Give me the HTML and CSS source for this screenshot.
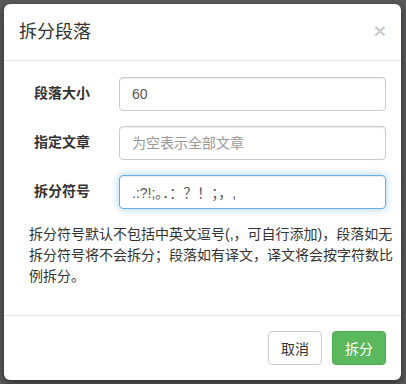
FILE: index.html
```html
<!DOCTYPE html>
<html lang="zh-CN">
<head>
    <meta charset="UTF-8">
    <meta name="viewport" content="width=device-width, initial-scale=1.0">
    <title>拆分段落</title>
    <link rel="stylesheet" href="styles.css">
</head>
<body>
    <div class="modal">
        <div class="modal-header">
            <h4 class="modal-title">拆分段落</h4>
            <button class="close" type="button">&times;</button>
        </div>

        <div class="modal-body">
            <div class="form-group">
                <label for="size">段落大小</label>
                <input type="text" id="size" class="form-control" value="60">
            </div>
            <div class="form-group">
                <label for="article">指定文章</label>
                <input type="text" id="article" class="form-control" placeholder="为空表示全部文章">
            </div>
            <div class="form-group">
                <label for="sep">拆分符号</label>
                <input type="text" id="sep" class="form-control focus" value=".:?!;。．：？！；，,">
            </div>
            <p class="help">拆分符号默认不包括中英文逗号(,，可自行添加)，段落如无拆分符号将不会拆分；段落如有译文，译文将会按字符数比例拆分。</p>
        </div>

        <div class="modal-footer">
            <button class="btn btn-default" type="button">取消</button>
            <button class="btn btn-success" type="button">拆分</button>
        </div>
    </div>
</body>
</html>
```

FILE: styles.css
```css
:root {
    --border: #e5e5e5;
    --text: #333333;
    --green: #5cb85c;
}

* {
    box-sizing: border-box;
}

body {
    margin: 0;
    padding: 4px 5px 5px 4px;
    background: #595959;
    font-family: "Liberation Sans", "Noto Sans CJK SC", sans-serif;
    font-size: 14px;
    line-height: 1.42857;
    color: var(--text);
}

.modal {
    background: #ffffff;
    border-radius: 6px;
    box-shadow: 0 3px 9px rgba(0, 0, 0, 0.5);
    width: 397px;
}

.modal-header {
    display: flex;
    justify-content: space-between;
    align-items: center;
    padding: 15px;
    border-bottom: 1px solid var(--border);
}

.modal-title {
    margin: 0;
    font-size: 18px;
    font-weight: 400;
    line-height: 26px;
}

.close {
    border: none;
    background: none;
    padding: 0;
    margin-top: -4px;
    font-family: "Liberation Sans", sans-serif;
    font-size: 21px;
    font-weight: bold;
    line-height: 1;
    color: #000000;
    opacity: 0.2;
}

.modal-body {
    padding: 16px 15px 15px;
}

.form-group {
    display: flex;
    align-items: center;
    margin-bottom: 15px;
}

.form-group label {
    width: 100px;
    padding-left: 15px;
    font-weight: bold;
}

.form-control {
    flex: 1;
    height: 34px;
    padding: 6px 12px;
    font-family: inherit;
    font-size: 14px;
    color: #555555;
    border: 1px solid #cccccc;
    border-radius: 4px;
    box-shadow: inset 0 1px 1px rgba(0, 0, 0, 0.075);
    outline: none;
}

.form-control::placeholder {
    color: #999999;
}

.form-control.focus {
    border-color: #66afe9;
    box-shadow: inset 0 1px 1px rgba(0, 0, 0, 0.075), 0 0 8px rgba(102, 175, 233, 0.6);
}

.help {
    margin: 0 -8px 13px 10px;
    line-height: 21px;
}

.modal-footer {
    display: flex;
    justify-content: flex-end;
    gap: 10px;
    padding: 15px;
    border-top: 1px solid var(--border);
}

.btn {
    height: 34px;
    padding: 6px 12px;
    font-family: inherit;
    font-size: 14px;
    border-radius: 4px;
    border: 1px solid transparent;
}

.btn-default {
    background: #ffffff;
    border-color: #cccccc;
    color: var(--text);
}

.btn-success {
    background: var(--green);
    border-color: #4cae4c;
    color: #ffffff;
}
```
